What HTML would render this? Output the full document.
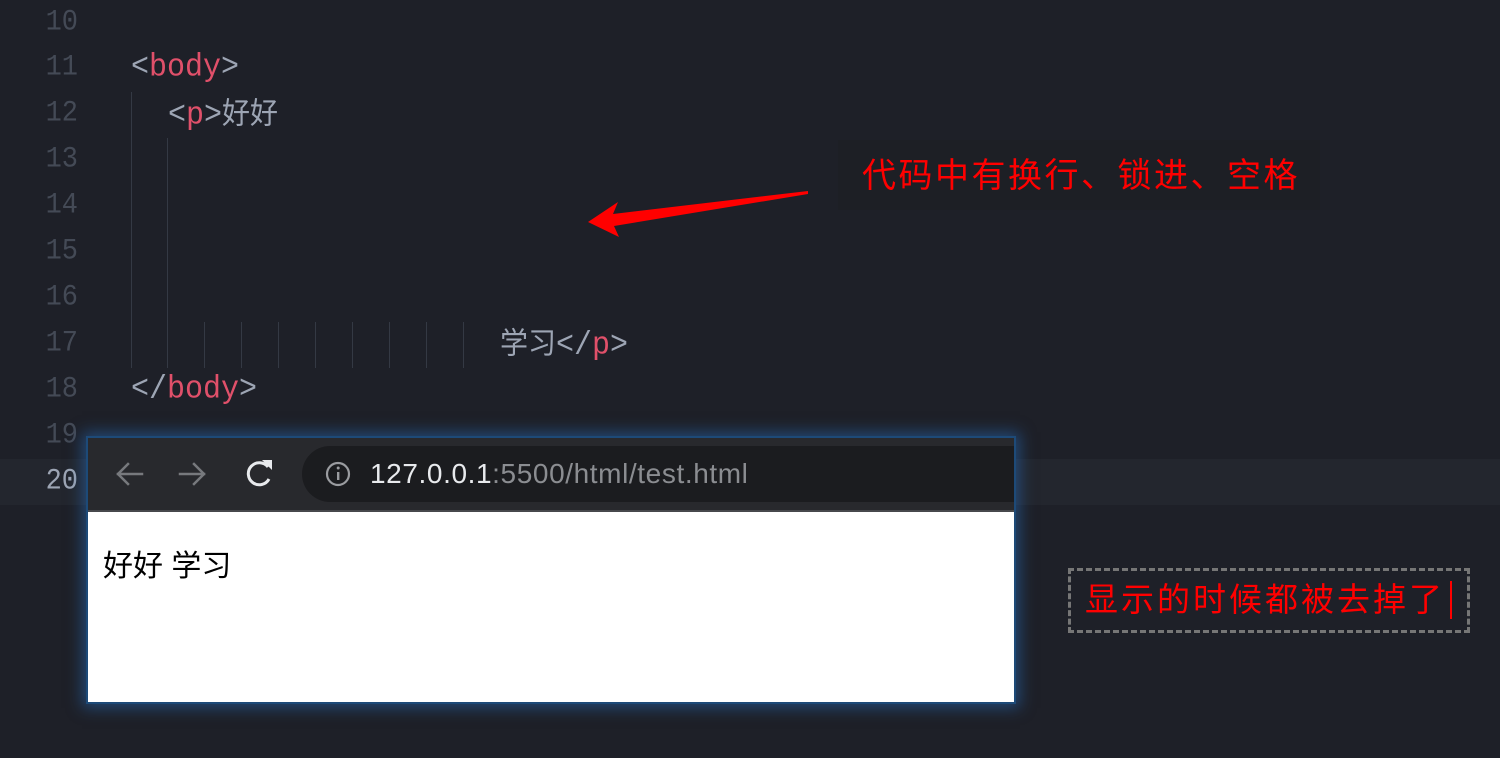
<!DOCTYPE html>
<html><head><meta charset="utf-8"><style>
body{margin:0;width:1500px;height:758px;background:#1e2028;overflow:hidden;position:relative;font-family:"Liberation Mono","Noto Sans CJK SC",monospace;}
.ln{position:absolute;left:0;width:78px;text-align:right;color:#444a56;font-size:27px;line-height:46px;height:46px;transform:scaleY(1.1);transform-origin:right center;}
.code{position:absolute;font-size:30px;line-height:46px;color:#9da5b4;white-space:pre;transform:scaleY(1.08);}
.t{color:#e0506a}
.g{position:absolute;width:1px;background:#343944;}
.cjk{font-family:"Liberation Sans","Noto Sans CJK SC",sans-serif;}
</style></head><body>
<div style="position:absolute;left:0;top:459px;width:1500px;height:46px;background:#23262e"></div>
<div class="ln" style="top:0">10</div>
<div class="ln" style="top:45px">11</div>
<div class="ln" style="top:91px">12</div>
<div class="ln" style="top:137px">13</div>
<div class="ln" style="top:183px">14</div>
<div class="ln" style="top:229px">15</div>
<div class="ln" style="top:275px">16</div>
<div class="ln" style="top:321px">17</div>
<div class="ln" style="top:367px">18</div>
<div class="ln" style="top:413px">19</div>
<div class="ln" style="top:459px;color:#9da5b4">20</div>
<div class="code" style="left:131px;top:45px">&lt;<span class="t">body</span>&gt;</div>
<div class="code" style="left:168px;top:91px">&lt;<span class="t">p</span>&gt;<span class="cjk" style="font-size:28px">好好</span></div>
<div class="code" style="left:500px;top:321px"><span class="cjk" style="font-size:28px">学习</span>&lt;/<span class="t">p</span>&gt;</div>
<div class="code" style="left:131px;top:367px">&lt;/<span class="t">body</span>&gt;</div>
<div class="g" style="left:131px;top:92px;height:276px"></div>
<div class="g" style="left:167px;top:138px;height:230px"></div>
<div class="g" style="left:204px;top:322px;height:46px"></div>
<div class="g" style="left:241px;top:322px;height:46px"></div>
<div class="g" style="left:278px;top:322px;height:46px"></div>
<div class="g" style="left:315px;top:322px;height:46px"></div>
<div class="g" style="left:352px;top:322px;height:46px"></div>
<div class="g" style="left:389px;top:322px;height:46px"></div>
<div class="g" style="left:426px;top:322px;height:46px"></div>
<div class="g" style="left:463px;top:322px;height:46px"></div>

<svg style="position:absolute;left:0;top:0" width="1500" height="758">
<polygon points="808,191 613,214 618,202 588,222 619,237 614,226 808,194" fill="#f00"/>
</svg>
<div style="position:absolute;left:838px;top:140px;width:482px;height:70px;background:#1d1f25"></div>
<div class="cjk" style="position:absolute;left:862px;top:152px;font-size:34px;letter-spacing:2.5px;color:#f00;white-space:nowrap;line-height:48px">代码中有换行、锁进、空格</div>

<div style="position:absolute;left:86px;top:436px;width:930px;height:268px;box-shadow:0 0 14px 4px rgba(40,110,190,.5);background:#1d4a78"></div>
<div style="position:absolute;left:88px;top:438px;width:926px;height:72px;background:#28292d"></div>
<div style="position:absolute;left:88px;top:510px;width:926px;height:2px;background:#47484c"></div>
<div style="position:absolute;left:302px;top:446px;width:712px;height:56px;background:#1b1c1f;border-radius:28px 0 0 28px"></div>
<svg style="position:absolute;left:88px;top:438px" width="300" height="72">
<g stroke="#77797d" stroke-width="2.5" fill="none" stroke-linecap="square">
<path d="M54 36H30M40 26L30 36L40 46"/>
<path d="M92 36H116M106 26L116 36L106 46"/>
</g>
<path d="M180 29A11 11 0 1 0 181 41" stroke="#e8eaed" stroke-width="3" fill="none"/>
<polygon points="174,22 184,22 184,32" fill="#e8eaed"/>
<circle cx="250" cy="36" r="11" stroke="#9a9ca0" stroke-width="2.2" fill="none"/>
<rect x="249" y="34" width="2.4" height="8" fill="#9a9ca0"/><circle cx="250.2" cy="30" r="1.5" fill="#9a9ca0"/>
</svg>
<div style="position:absolute;left:370px;top:457px;font-family:'Liberation Sans',sans-serif;font-size:28px;letter-spacing:0.6px;line-height:34px;color:#e8eaed">127.0.0.1<span style="color:#8b8d91">:5500/html/test.html</span></div>
<div style="position:absolute;left:88px;top:512px;width:926px;height:190px;background:#fff"></div>
<div class="cjk" style="position:absolute;left:103px;top:546px;font-size:30px;line-height:42px;color:#000">好好 学习</div>

<div style="position:absolute;left:1068px;top:568px;width:396px;height:59px;border:3px dashed #767676"></div>
<div class="cjk" style="position:absolute;left:1085px;top:578px;font-size:33px;letter-spacing:3px;color:#f00;line-height:44px;white-space:nowrap">显示的时候都被去掉了</div>
<div style="position:absolute;left:1450px;top:581px;width:2px;height:38px;background:#f00"></div>
</body></html>
